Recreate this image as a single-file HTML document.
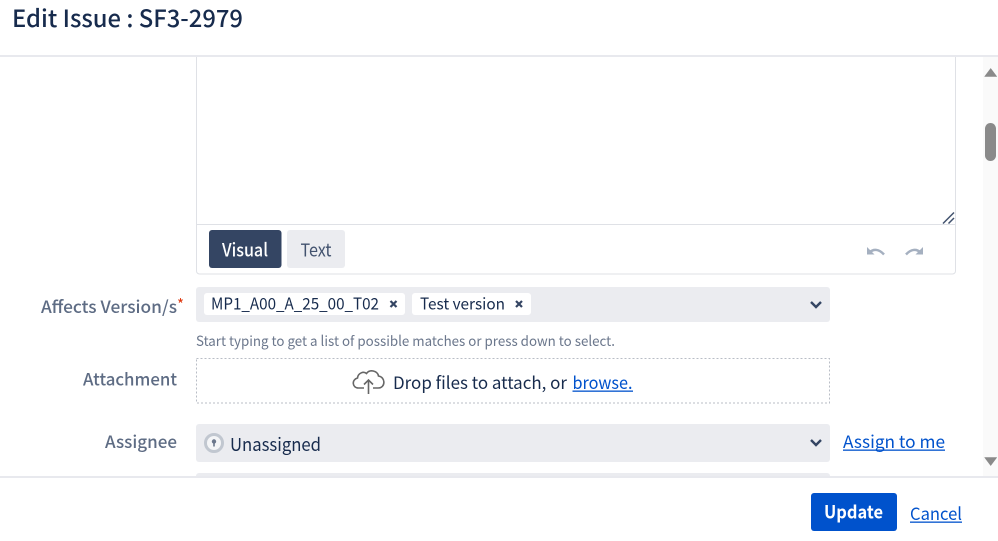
<!DOCTYPE html>
<html><head><meta charset="utf-8"><style>
html,body{margin:0;padding:0;background:#fff;width:998px;height:541px;overflow:hidden}
svg{display:block}
text{font-family:"Noto Sans CJK JP","Liberation Sans",sans-serif;white-space:pre}
</style></head><body>
<svg width="998" height="541" viewBox="0 0 998 541" xmlns="http://www.w3.org/2000/svg">
<rect width="998" height="541" fill="#fff"/>
<text x="12" y="27" font-size="24" font-weight="500" fill="#172b4d" textLength="231" lengthAdjust="spacingAndGlyphs">Edit Issue : SF3-2979</text>
<rect x="0" y="55" width="998" height="2" fill="#e8e9ee"/>
<rect x="983" y="57" width="15" height="419" fill="#fafafa"/>
<path d="M990.700 68.500l6 8h-12z" fill="#8a8a8a" stroke="#8a8a8a" stroke-width=".6" stroke-linejoin="round"/>
<rect x="985" y="123" width="11" height="38" rx="5.500" fill="#8a8a8a"/>
<path d="M984.700 457.500h12l-6 8z" fill="#8a8a8a" stroke="#8a8a8a" stroke-width=".6" stroke-linejoin="round"/>
<path d="M196.500 57v214a3 3 0 0 0 3 3h753a3 3 0 0 0 3-3V57" fill="none" stroke="#dfe1e6"/>
<path d="M197 224.500h758" stroke="#dfe1e6"/>
<path d="M943 223.500l11-11M948.500 223.500l5.500-5.500" stroke="#42526e" stroke-width="1.500" fill="none"/>
<rect x="209" y="230" width="72.500" height="38" rx="3" fill="#344563"/>
<rect x="287" y="230" width="58" height="38" rx="3" fill="#ebecf0"/>
<text x="222" y="256.500" font-size="18" font-weight="500" fill="#fff" textLength="46" lengthAdjust="spacingAndGlyphs">Visual</text>
<text x="300.500" y="256.500" font-size="18" fill="#42526e" textLength="31" lengthAdjust="spacingAndGlyphs">Text</text>
<path d="M867 247v7.500h7.500z" fill="#a5b0c0"/>
<path d="M869.500 252.500c4-4 9.500-3.500 14.500 2" fill="none" stroke="#a5b0c0" stroke-width="2.500"/>
<path d="M923 247v7.500h-7.500z" fill="#a5b0c0"/>
<path d="M920.500 252.500c-4-4-9.500-3.500-14.500 2" fill="none" stroke="#a5b0c0" stroke-width="2.500"/>
<text x="177" y="313" font-size="17" font-weight="500" fill="#5e6c84" text-anchor="end" textLength="136" lengthAdjust="spacingAndGlyphs">Affects Version/s</text>
<text x="177" y="310" font-size="15" fill="#de350b">*</text>
<rect x="196" y="287" width="634" height="35" rx="3" fill="#ebecf0"/>
<rect x="204" y="293" width="201" height="22" rx="3" fill="#fff"/>
<rect x="412" y="293" width="119" height="22" rx="3" fill="#fff"/>
<text x="211" y="309.500" font-size="16" fill="#172b4d" textLength="168" lengthAdjust="spacingAndGlyphs">MP1_A00_A_25_00_T02</text>
<path d="M390.500 301l6 6M396.500 301l-6 6" stroke="#344563" stroke-width="2.200"/>
<text x="420" y="309.500" font-size="16" fill="#172b4d" textLength="85" lengthAdjust="spacingAndGlyphs">Test version</text>
<path d="M516 301l6 6M522 301l-6 6" stroke="#344563" stroke-width="2.200"/>
<path d="M811 302l5 5 5-5" fill="none" stroke="#344563" stroke-width="2.400"/>
<text x="196" y="346" font-size="14" fill="#6b778c" textLength="419" lengthAdjust="spacingAndGlyphs">Start typing to get a list of possible matches or press down to select.</text>
<text x="177" y="385.500" font-size="17" font-weight="500" fill="#5e6c84" text-anchor="end" textLength="94" lengthAdjust="spacingAndGlyphs">Attachment</text>
<rect x="196.500" y="358.500" width="633" height="44.500" fill="none" stroke="#b8bdc6" stroke-dasharray="2 2"/>
<path d="M364 388h-5.500c-6.500 0-7-8.500-1-10 .5-5 6-7 9-4.500 3-4.500 11-3 12 2.500 7 1 7.500 12-.5 12H373" fill="none" stroke="#666" stroke-width="1.600"/>
<path d="M368.500 394v-14M364 384.500l4.500-4.500 4.500 4.500" fill="none" stroke="#666" stroke-width="1.600"/>
<text x="393" y="389" font-size="17" fill="#172b4d" textLength="174" lengthAdjust="spacingAndGlyphs">Drop files to attach, or</text>
<text x="572.500" y="389" font-size="17" fill="#0052cc" textLength="60" lengthAdjust="spacingAndGlyphs">browse.</text>
<rect x="572.500" y="390.500" width="60.500" height="1.300" fill="#0052cc"/>
<text x="177" y="448" font-size="17" font-weight="500" fill="#5e6c84" text-anchor="end" textLength="72" lengthAdjust="spacingAndGlyphs">Assignee</text>
<rect x="196" y="424" width="634" height="38" rx="3" fill="#ebecf0"/>
<circle cx="214" cy="443" r="8.500" fill="#f4f5f7" stroke="#c1c7d0" stroke-width="3"/>
<circle cx="214" cy="441.500" r="2.200" fill="#6b778c"/>
<rect x="213.200" y="442" width="1.600" height="4.500" fill="#6b778c"/>
<text x="230" y="451" font-size="18" fill="#172b4d" textLength="91" lengthAdjust="spacingAndGlyphs">Unassigned</text>
<path d="M811 440l5 5 5-5" fill="none" stroke="#344563" stroke-width="2.400"/>
<text x="843" y="448" font-size="17" fill="#0052cc" textLength="102" lengthAdjust="spacingAndGlyphs">Assign to me</text>
<rect x="843" y="449.500" width="102" height="1.300" fill="#0052cc"/>
<path d="M196 476a3 3 0 0 1 3-3h628a3 3 0 0 1 3 3z" fill="#ebecf0"/>
<rect x="0" y="476" width="998" height="2" fill="#e8e9ee"/>
<rect x="811" y="493" width="86" height="38" rx="3" fill="#0052cc"/>
<text x="824" y="518.500" font-size="18" font-weight="700" fill="#fff" textLength="59" lengthAdjust="spacingAndGlyphs">Update</text>
<text x="910" y="520" font-size="17" fill="#0052cc" textLength="52" lengthAdjust="spacingAndGlyphs">Cancel</text>
<rect x="910" y="521.500" width="52" height="1.300" fill="#0052cc"/>
</svg>
</body></html>
